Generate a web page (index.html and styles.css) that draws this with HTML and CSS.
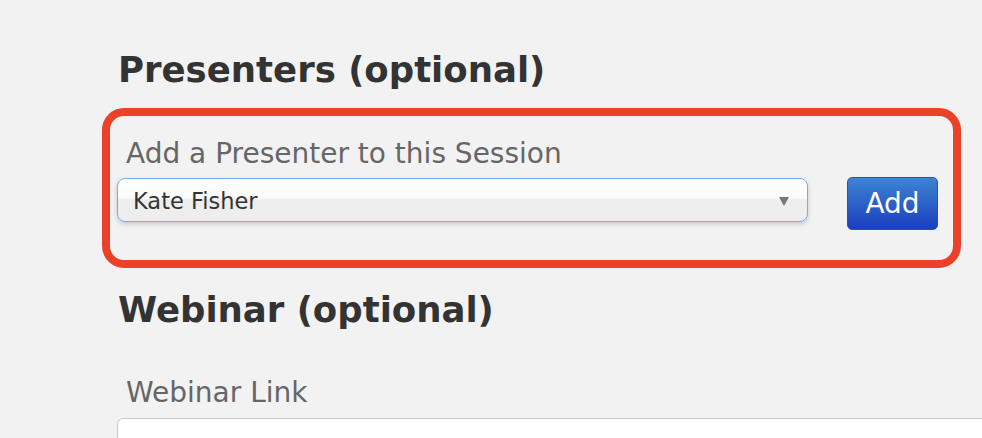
FILE: index.html
```html
<!DOCTYPE html>
<html lang="en">
<head>
    <meta charset="UTF-8">
    <title>Session - Presenters</title>
    <link rel="stylesheet" href="styles.css">
</head>
<body>
    <div class="page">
        <h2>Presenters (optional)</h2>

        <div class="highlight">
            <label class="label" for="presenter">Add a Presenter to this Session</label>
            <div class="row">
                <div class="select" id="presenter">
                    <span>Kate Fisher</span>
                    <span class="arrow"></span>
                </div>
                <a href="#" class="button">Add</a>
            </div>
        </div>

        <h2>Webinar (optional)</h2>

        <div class="field">
            <label class="label" for="webinar">Webinar Link</label>
            <input class="input" id="webinar" type="text">
        </div>
    </div>
</body>
</html>
```

FILE: styles.css
```css
* {
    margin: 0;
    padding: 0;
    box-sizing: border-box;
}

body {
    font-family: "DejaVu Sans", Verdana, sans-serif;
    background: #f2f2f2;
    color: #333;
    overflow: hidden;
}

.page {
    padding: 48px 0 0 102px;
    width: 982px;
}

h2 {
    font-size: 35.5px;
    font-weight: bold;
    color: #333;
    padding-left: 16px;
    line-height: 44px;
}

.highlight {
    margin-top: 16px;
    width: 859px;
    height: 160px;
    border: 8px solid #eb4128;
    border-radius: 22px;
    padding: 21px 0 0 7px;
}

.label {
    display: block;
    font-size: 28px;
    color: #666;
    padding-left: 9px;
    line-height: 34px;
}

.row {
    display: flex;
    align-items: flex-start;
    margin-top: 7px;
}

.select {
    width: 691px;
    height: 44px;
    border: 1px solid #7ea6f2;
    border-radius: 8px;
    background: linear-gradient(#ffffff 0%, #fbfbfb 45%, #ededed 50%, #eeeeee 100%);
    box-shadow: 0 2px 5px rgba(0, 0, 0, 0.18);
    display: flex;
    align-items: center;
    justify-content: space-between;
    padding: 2px 18px 0 15px;
    font-size: 22.5px;
    color: #333;
}

.arrow {
    width: 0;
    height: 0;
    border-left: 5px solid transparent;
    border-right: 5px solid transparent;
    border-top: 9px solid #777;
}

.button {
    margin-left: 39px;
    margin-top: -1px;
    width: 91px;
    height: 53px;
    border-radius: 5px;
    background: linear-gradient(#3d84d2, #1b3fbf);
    border: 1px solid #2a52b5;
    color: white;
    text-decoration: none;
    font-size: 28px;
    display: flex;
    align-items: center;
    justify-content: center;
}

.highlight + h2 {
    margin-top: 20px;
}

.field {
    margin-top: 44px;
    padding-left: 15px;
}

.input {
    display: block;
    margin-top: 8px;
    width: 865px;
    height: 44px;
    background: white;
    border: 1px solid #c8c8c8;
    border-right: none;
    border-radius: 6px 0 0 6px;
}
```
